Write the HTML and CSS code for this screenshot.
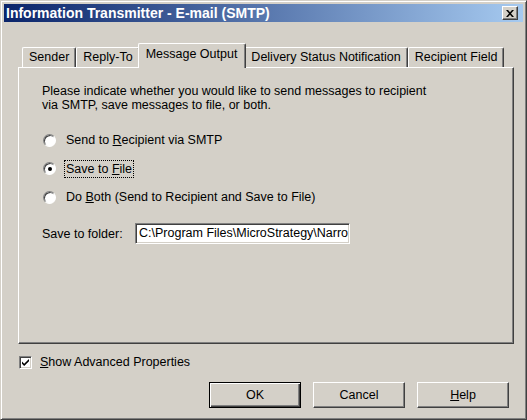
FILE: index.html
```html
<!DOCTYPE html>
<html>
<head>
<meta charset="utf-8">
<link rel="stylesheet" href="styles.css">
</head>
<body>
<div class="window">
  <div class="titlebar">
    <span class="title">Information Transmitter - E-mail (SMTP)</span>
    <span class="close"><svg width="8" height="7" viewBox="0 0 8 7"><path d="M0 0h2l2 2.2L6 0h2L5 3.5 8 7H6L4 4.8 2 7H0l3-3.5z" fill="#000"/></svg></span>
  </div>
  <div class="content">
    <div class="tabs">
      <div class="tab">Sender</div>
      <div class="tab">Reply-To</div>
      <div class="tab selected">Message Output</div>
      <div class="tab">Delivery Status Notification</div>
      <div class="tab">Recipient Field</div>
    </div>
    <div class="panel">
      <p class="intro">Please indicate whether you would like to send messages to recipient<br>via SMTP, save messages to file, or both.</p>
      <div class="options">
        <div class="radio"><span class="rb"></span><span class="lbl">Send to <u>R</u>ecipient via SMTP</span></div>
        <div class="radio"><span class="rb on"></span><span class="lbl focus">Save to <u>F</u>ile</span></div>
        <div class="radio"><span class="rb"></span><span class="lbl">Do <u>B</u>oth (Send to Recipient and Save to File)</span></div>
      </div>
      <div class="folder">
        <span class="flabel">Save to folder:</span>
        <div class="input">C:\Program Files\MicroStrategy\Narro</div>
      </div>
    </div>
    <div class="check">
      <span class="cb"><svg width="9" height="9" viewBox="0 0 9 9"><path d="M1 3.5l2.2 2.2L8 1v2.2L3.2 8 1 5.8z" fill="#000"/></svg></span>
      <span><u>S</u>how Advanced Properties</span>
    </div>
    <div class="buttons">
      <div class="btn default"><span>OK</span></div>
      <div class="btn"><span>Cancel</span></div>
      <div class="btn"><span><u>H</u>elp</span></div>
    </div>
  </div>
</div>
</body>
</html>
```
FILE: styles.css
```css
html, body {
  margin: 0;
  padding: 0;
  background: #d4d0c8;
}
body {
  font-family: "Liberation Sans", Arial, sans-serif;
  font-size: 12.5px;
  color: #000;
}
.window {
  width: 527px;
  height: 420px;
  box-sizing: border-box;
  background: #d4d0c8;
  border: 1px solid;
  border-color: #d4d0c8 #404040 #404040 #d4d0c8;
  box-shadow: inset 1px 1px #fff, inset -1px -1px #808080;
  padding: 3px 3px 3px 3px;
  display: flex;
  flex-direction: column;
}
.titlebar {
  height: 18px;
  background: linear-gradient(to right, #0a246a, #a6caf0);
  display: flex;
  align-items: center;
  justify-content: space-between;
  padding-left: 2px;
}
.title {
  color: #fff;
  font-weight: bold;
  font-size: 14px;
  white-space: nowrap;
}
.close {
  width: 16px;
  height: 14px;
  box-sizing: border-box;
  background: #d4d0c8;
  border: 1px solid;
  border-color: #fff #404040 #404040 #fff;
  box-shadow: inset -1px -1px #808080;
  margin-right: 5px;
  display: flex;
  align-items: center;
  justify-content: center;
}
.content {
  padding-left: 14px;
  padding-top: 21px;
}
.tabs {
  display: flex;
  align-items: flex-end;
  height: 24px;
  padding-left: 4px;
}
.tab {
  height: 20px;
  box-sizing: border-box;
  border-top: 1px solid #fff;
  border-left: 1px solid #fff;
  border-right: 1px solid #404040;
  box-shadow: inset -1px 0 #808080;
  border-radius: 2px 2px 0 0;
  padding: 0 6px;
  line-height: 19px;
  white-space: nowrap;
  background: #d4d0c8;
}
.tab.selected {
  position: relative;
  z-index: 1;
  height: 25px;
  margin: 0 -2px -1px;
  padding: 0 8px 0 7px;
  line-height: 20px;
}
.panel {
  width: 496px;
  height: 277px;
  box-sizing: border-box;
  border: 1px solid;
  border-color: #fff #404040 #404040 #fff;
  box-shadow: inset -1px -1px #808080;
  padding: 16px 0 0 23px;
}
.intro {
  margin: 0;
  line-height: 14px;
}
.options {
  margin-top: 21px;
  display: flex;
  flex-direction: column;
  gap: 14.5px;
}
.radio {
  display: flex;
  align-items: center;
  height: 14px;
}
.rb {
  width: 13px;
  height: 13px;
  box-sizing: border-box;
  border-radius: 50%;
  background: #fff;
  border: 1px solid;
  border-color: #808080 #fff #fff #808080;
  box-shadow: inset 1px 1px #404040;
  margin-left: 1px;
  margin-right: 8px;
  display: flex;
  align-items: center;
  justify-content: center;
}
.rb.on::after {
  content: "";
  width: 4px;
  height: 4px;
  border-radius: 50%;
  background: #000;
}
.lbl {
  padding: 1px 1px;
  border: 1px solid transparent;
}
.lbl.focus {
  border: 1px dotted #000;
}
.folder {
  margin-top: 19px;
  display: flex;
  align-items: center;
}
.flabel {
  width: 93px;
}
.input {
  width: 215px;
  height: 21px;
  box-sizing: border-box;
  background: #fff;
  border: 1px solid;
  border-color: #808080 #fff #fff #808080;
  box-shadow: inset 1px 1px #404040, inset -1px -1px #d4d0c8;
  padding: 0 0 0 3px;
  line-height: 19px;
  white-space: nowrap;
  overflow: hidden;
}
.check {
  display: flex;
  align-items: center;
  margin-top: 11px;
  height: 14px;
  padding-left: 1px;
}
.cb {
  width: 13px;
  height: 13px;
  box-sizing: border-box;
  background: #fff;
  border: 1px solid;
  border-color: #808080 #fff #fff #808080;
  box-shadow: inset 1px 1px #404040, inset -1px -1px #d4d0c8;
  display: flex;
  align-items: center;
  justify-content: center;
  margin-right: 8px;
}
.buttons {
  display: flex;
  justify-content: flex-end;
  gap: 12px;
  margin-top: 13px;
  width: 491px;
}
.btn {
  width: 92px;
  height: 26px;
  box-sizing: border-box;
  border: 1px solid;
  border-color: #fff #404040 #404040 #fff;
  box-shadow: inset -1px -1px #808080;
  display: flex;
  align-items: center;
  justify-content: center;
}
.btn.default {
  border: 1px solid #000;
  box-shadow: inset 1px 1px #fff, inset -1px -1px #404040, inset -2px -2px #808080;
}
```
